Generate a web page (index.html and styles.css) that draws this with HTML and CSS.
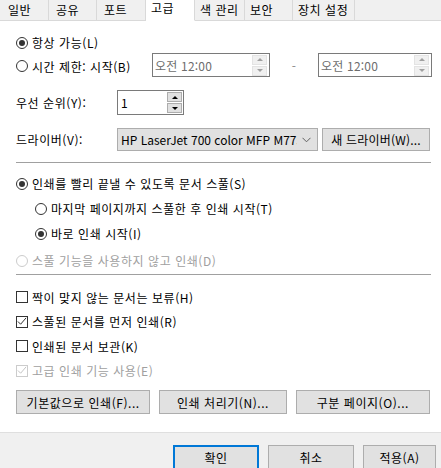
FILE: index.html
```html
<!DOCTYPE html>
<html lang="ko">
<head>
<meta charset="utf-8">
<title>프린터 속성 - 고급</title>
<link rel="stylesheet" href="styles.css">
</head>
<body>
<div class="dialog">
  <div class="tabs">
    <div class="tab t1">일반</div>
    <div class="tab t2">공유</div>
    <div class="tab t3">포트</div>
    <div class="tab t4 active">고급</div>
    <div class="tab t5">색 관리</div>
    <div class="tab t6">보안</div>
    <div class="tab t7">장치 설정</div>
    <div class="tab-fill"></div>
  </div>

  <div class="page">
    <div class="row row-always">
      <span class="radio checked"></span><span class="label">항상 가능(L)</span>
    </div>

    <div class="row row-time">
      <div class="timelabel"><span class="radio"></span><span class="label">시간 제한: 시작(B)</span></div>
      <div class="timebox first">
        <span class="timetext">오전 12:00</span>
        <div class="spin disabled"><span class="sb up"></span><span class="sb down"></span></div>
      </div>
      <span class="dash">-</span>
      <div class="timebox second">
        <span class="timetext">오전 12:00</span>
        <div class="spin disabled"><span class="sb up"></span><span class="sb down"></span></div>
      </div>
    </div>

    <div class="row row-priority">
      <span class="field-label">우선 순위(Y):</span>
      <div class="numbox">
        <span class="numtext">1</span>
        <div class="spin"><span class="sb up"></span><span class="sb down"></span></div>
      </div>
    </div>

    <div class="row row-driver">
      <span class="field-label">드라이버(V):</span>
      <div class="combo">
        <span class="combotext">HP LaserJet 700 color MFP M775</span>
        <svg class="chev" width="9" height="6" viewBox="0 0 9 6"><path d="M0.5 0.8 L4.5 4.8 L8.5 0.8" fill="none" stroke="#606060" stroke-width="1"/></svg>
      </div>
      <div class="btn newdrv">새 드라이버(W)...</div>
    </div>

    <div class="sep sep1"></div>

    <div class="row spoolrow">
      <span class="radio checked"></span><span class="label">인쇄를 빨리 끝낼 수 있도록 문서 스풀(S)</span>
    </div>
    <div class="row spoolrow sub">
      <span class="radio"></span><span class="label">마지막 페이지까지 스풀한 후 인쇄 시작(T)</span>
    </div>
    <div class="row spoolrow sub">
      <span class="radio checked"></span><span class="label">바로 인쇄 시작(I)</span>
    </div>
    <div class="row spoolrow direct disabled">
      <span class="radio"></span><span class="label">스풀 기능을 사용하지 않고 인쇄(D)</span>
    </div>

    <div class="sep sep2"></div>

    <div class="checks">
      <div class="row checkrow"><span class="check"></span><span class="label">짝이 맞지 않는 문서는 보류(H)</span></div>
      <div class="row checkrow"><span class="check checked"><svg width="11" height="11" viewBox="0 0 11 11"><path d="M1 5.5 L4 8.5 L10 1.5" fill="none" stroke="#333" stroke-width="1.1"/></svg></span><span class="label">스풀된 문서를 먼저 인쇄(R)</span></div>
      <div class="row checkrow"><span class="check"></span><span class="label">인쇄된 문서 보관(K)</span></div>
      <div class="row checkrow disabled"><span class="check checked"><svg width="11" height="11" viewBox="0 0 11 11"><path d="M1 5.5 L4 8.5 L10 1.5" fill="none" stroke="#c4c4c4" stroke-width="1.1"/></svg></span><span class="label">고급 인쇄 기능 사용(E)</span></div>
    </div>

    <div class="btnrow">
      <div class="btn b-default">기본값으로 인쇄(F)...</div>
      <div class="btn b-proc">인쇄 처리기(N)...</div>
      <div class="btn b-sep">구분 페이지(O)...</div>
    </div>
  </div>

  <div class="footer">
    <div class="btn fbtn ok">확인</div>
    <div class="btn fbtn cancel">취소</div>
    <div class="btn fbtn apply">적용(A)</div>
  </div>
</div>
</body>
</html>
```

FILE: styles.css
```css
* { box-sizing: border-box; }

html, body {
  margin: 0;
  padding: 0;
  background: #ffffff;
}

body {
  width: 441px;
  height: 468px;
  overflow: hidden;
  font-family: "Noto Sans CJK KR", "Noto Sans", sans-serif;
  font-size: 12px;
  letter-spacing: 0.55px;
  color: #000;
}

.dialog {
  width: 441px;
  height: 468px;
  display: flex;
  flex-direction: column;
}

/* Tabs */
.tabs {
  display: flex;
  height: 21px;
  background: #f0f0f0;
  flex: none;
}

.tab {
  height: 21px;
  border-right: 1px solid #d9d9d9;
  border-bottom: 1px solid #d9d9d9;
  padding-left: 5px;
  line-height: 19px;
  white-space: nowrap;
  background: #f0f0f0;
}

.t1 { width: 49px; padding-left: 8px; }
.t2 { width: 48px; padding-left: 7px; }
.t3 { width: 49px; padding-left: 7px; }
.t4 { width: 49px; }
.t5 { width: 50px; }
.t6 { width: 48px; }
.t7 { width: 62px; }

.tab.active {
  background: #ffffff;
  border-bottom-color: #ffffff;
  line-height: 16px;
}

.tab-fill {
  flex: 1;
  height: 21px;
  border-bottom: 1px solid #d9d9d9;
}

/* Page */
.page {
  flex: 1;
  background: #ffffff;
  padding: 11px 11px 0 16px;
  display: flex;
  flex-direction: column;
}

.row {
  display: flex;
  align-items: center;
  white-space: nowrap;
}

.label { margin-left: 4px; }

.radio {
  width: 12px;
  height: 12px;
  border: 1px solid #333;
  border-radius: 50%;
  display: flex;
  align-items: center;
  justify-content: center;
  flex: none;
  background: #fff;
}

.radio.checked::after {
  content: "";
  width: 6px;
  height: 6px;
  border-radius: 50%;
  background: #333;
}

.check {
  width: 12px;
  height: 12px;
  border: 1px solid #333;
  flex: none;
  display: flex;
  align-items: center;
  justify-content: center;
  background: #fff;
}

.check svg { display: block; }

.disabled { color: #a0a0a0; }
.disabled .radio, .disabled .check { border-color: #cccccc; }

.row-always { height: 21px; }

.row-time { height: 24px; }

.timelabel {
  width: 136px;
  flex: none;
  display: flex;
  align-items: center;
  padding-top: 2px;
}

.timebox {
  width: 118px;
  height: 24px;
  border: 1px solid #7a7a7a;
  background: #fff;
  display: flex;
  align-items: center;
  justify-content: space-between;
  padding-left: 2px;
  padding-right: 2px;
  flex: none;
}

.timebox.second { width: 114px; }

.timetext { color: #6d6d6d; letter-spacing: 0.2px; }

.dash {
  width: 48px;
  text-align: center;
  color: #8a8a8a;
  padding-top: 1px;
  flex: none;
}

.spin {
  display: flex;
  flex-direction: column;
  gap: 1px;
}

.sb {
  width: 15px;
  height: 10px;
  background: #e1e1e1;
  border: 1px solid #adadad;
  display: flex;
  align-items: center;
  justify-content: center;
}

.sb::after {
  content: "";
  width: 0;
  height: 0;
  border-left: 3px solid transparent;
  border-right: 3px solid transparent;
}

.sb.up::after { border-bottom: 3px solid #000; }
.sb.down::after { border-top: 3px solid #000; }

.spin.disabled .sb { background: #f0f0f0; border-color: #e3e3e3; }
.spin.disabled .sb.up::after { border-bottom-color: #a0a0a0; }
.spin.disabled .sb.down::after { border-top-color: #a0a0a0; }

.field-label {
  width: 101px;
  flex: none;
}

.row-priority { height: 25px; margin-top: 13px; }

.numbox {
  width: 67px;
  height: 25px;
  border: 1px solid #7a7a7a;
  display: flex;
  align-items: center;
  justify-content: space-between;
  padding-left: 3px;
  padding-right: 1px;
}

.row-driver { height: 23px; margin-top: 13px; }

.combo {
  width: 201px;
  height: 23px;
  background: #e1e1e1;
  border: 1px solid #adadad;
  display: flex;
  align-items: center;
  padding-left: 3px;
  padding-right: 6px;
  overflow: hidden;
  flex: none;
}

.combotext {
  flex: 1;
  min-width: 0;
  overflow: hidden;
  white-space: nowrap;
  margin-right: 5px;
  letter-spacing: 0;
}

.chev { flex: none; display: block; }

.btn {
  background: #e1e1e1;
  border: 1px solid #adadad;
  display: flex;
  align-items: center;
  justify-content: center;
  white-space: nowrap;
}

.newdrv {
  width: 109px;
  height: 23px;
  margin-left: 4px;
  letter-spacing: 0.2px;
}

.sep {
  height: 1px;
  background: #a0a0a0;
  margin-right: -1px;
  flex: none;
}

.sep1 { margin-top: 11px; }

.spoolrow { height: 25px; }
.sep1 + .spoolrow { margin-top: 8px; }
.spoolrow.sub { padding-left: 19px; }
.spoolrow.direct { margin-top: 2px; }

.sep2 { margin-top: 1px; }

.checks {
  margin-top: 10px;
  display: flex;
  flex-direction: column;
}

.checkrow { height: 24.5px; }

.btnrow {
  display: flex;
  margin-top: 7px;
  height: 24px;
}

.btnrow .btn { height: 24px; }
.b-default { width: 135px; }
.b-proc { width: 128px; margin-left: 9px; }
.b-sep { width: 135px; margin-left: 9px; }

/* Footer */
.footer {
  flex: none;
  height: 36px;
  background: #f0f0f0;
  border-top: 1px solid #dfdfdf;
  display: flex;
  align-items: flex-start;
  padding-top: 12px;
  padding-left: 173px;
}

.fbtn {
  width: 86px;
  height: 26px;
  padding-bottom: 2px;
}

.fbtn.ok {
  border-color: #0078d7;
  box-shadow: inset 0 0 0 1px #0078d7;
}

.fbtn.cancel { margin-left: 9px; }
.fbtn.apply { margin-left: 9px; width: 73px; }
```
